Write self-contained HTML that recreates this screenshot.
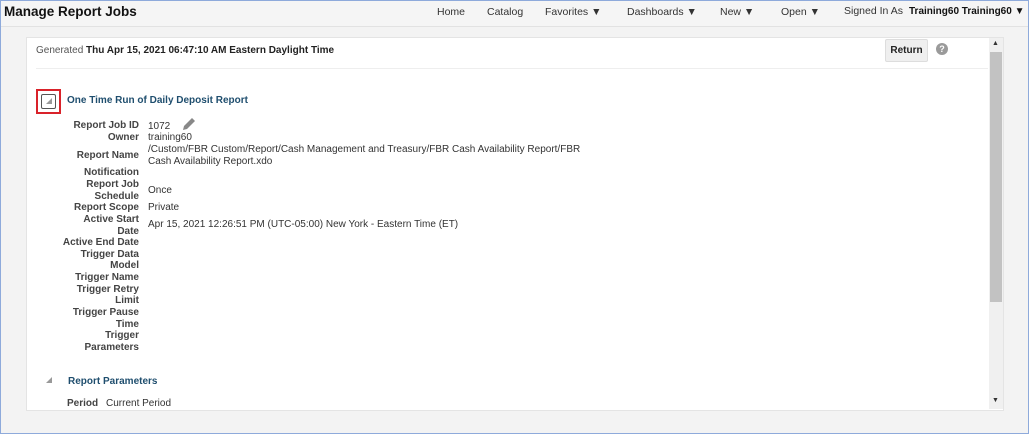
<!DOCTYPE html>
<html><head><style>
*{margin:0;padding:0;box-sizing:border-box}
body{width:1029px;height:434px;overflow:hidden;background:#fff;font-family:"Liberation Sans",Arial,sans-serif;color:#333;position:relative}
.frame{position:absolute;left:0;top:0;width:1029px;height:434px;border:1px solid #8eaadb;background:#f3f3f3}
.hdr{position:absolute;left:1px;top:1px;width:1027px;height:26px;background:#f5f5f5;border-bottom:1px solid #e2e2e2}
.t{position:absolute;white-space:nowrap;font-size:10px}
.nav{font-size:10.5px;top:6px;color:#333}
.panel{position:absolute;left:26px;top:37px;width:978px;height:374px;background:#fff;border:1px solid #e4e4e4}
.lab{position:absolute;right:890px;text-align:right;font-weight:bold;color:#444;font-size:10px;white-space:nowrap;line-height:11.6px;margin-top:1px}
.val{position:absolute;left:148px;font-size:10px;white-space:nowrap;line-height:11.6px;color:#333;margin-top:1px}
</style></head><body>
<div class="frame"></div>
<div class="hdr"></div>
<div class="t" style="left:4px;top:4px;font-size:13.5px;font-weight:bold;color:#111">Manage Report Jobs</div>
<div class="t nav" style="left:437px">Home</div>
<div class="t nav" style="left:487px">Catalog</div>
<div class="t nav" style="left:545px">Favorites ▼</div>
<div class="t nav" style="left:627px">Dashboards ▼</div>
<div class="t nav" style="left:720px">New ▼</div>
<div class="t nav" style="left:781px">Open ▼</div>
<div class="t nav" style="left:844px;top:5px">Signed In As</div>
<div class="t nav" style="left:909px;font-size:10px;font-weight:bold;color:#111">Training60 Training60 ▼</div>
<div class="panel"></div>
<div style="position:absolute;left:36px;top:68px;width:952px;height:1px;background:#eee"></div>
<div class="t" style="left:36px;top:45px;color:#555">Generated <b style="color:#222">Thu Apr 15, 2021 06:47:10 AM Eastern Daylight Time</b></div>
<div class="t" style="left:885px;top:39px;width:43px;height:23px;background:#efefef;border:1px solid #ddd;border-radius:2px;font-weight:bold;color:#222;text-align:center;line-height:21px">Return</div>
<div style="position:absolute;left:936px;top:43px;width:12px;height:12px;border-radius:50%;background:#9a9a9a;color:#fff;font-size:9px;font-weight:bold;text-align:center;line-height:12px">?</div>
<div style="position:absolute;left:989px;top:38px;width:14px;height:371px;background:#f0f0f0"></div>
<div style="position:absolute;left:990px;top:52px;width:12px;height:250px;background:#c2c2c2"></div>
<div class="t" style="left:992px;top:40px;font-size:7px;color:#333">▲</div>
<div class="t" style="left:992px;top:397px;font-size:7px;color:#333">▼</div>
<div style="position:absolute;left:36px;top:89px;width:25px;height:25px;border:2px solid #d9222a"></div>
<div style="position:absolute;left:41px;top:94px;width:15px;height:15px;border:1.5px solid #555;border-radius:2px;background:#fff"></div>
<div style="position:absolute;left:46px;top:98px;width:0;height:0;border-left:6px solid transparent;border-bottom:6px solid #999"></div>
<div class="t" style="left:67px;top:95px;font-weight:bold;color:#1f4e6e">One Time Run of Daily Deposit Report</div>
<div class="lab" style="top:119px">Report Job ID</div>
<div class="lab" style="top:131px">Owner</div>
<div class="lab" style="top:149px">Report Name</div>
<div class="lab" style="top:166px">Notification</div>
<div class="lab" style="top:178px">Report Job</div>
<div class="lab" style="top:190px">Schedule</div>
<div class="lab" style="top:201px">Report Scope</div>
<div class="lab" style="top:213px">Active Start</div>
<div class="lab" style="top:225px">Date</div>
<div class="lab" style="top:236px">Active End Date</div>
<div class="lab" style="top:248px">Trigger Data</div>
<div class="lab" style="top:259px">Model</div>
<div class="lab" style="top:271px">Trigger Name</div>
<div class="lab" style="top:283px">Trigger Retry</div>
<div class="lab" style="top:294px">Limit</div>
<div class="lab" style="top:306px">Trigger Pause</div>
<div class="lab" style="top:318px">Time</div>
<div class="lab" style="top:329px">Trigger</div>
<div class="lab" style="top:341px">Parameters</div>
<div class="val" style="top:120px">1072</div>
<svg style="position:absolute;left:182px;top:117px" width="14" height="14" viewBox="0 0 14 14"><path d="M1 13 L2 9 L10 1 L13 4 L5 12 Z" fill="#888"/></svg>
<div class="val" style="top:131px">training60</div>
<div class="val" style="top:143px">/Custom/FBR Custom/Report/Cash Management and Treasury/FBR Cash Availability Report/FBR</div>
<div class="val" style="top:155px">Cash Availability Report.xdo</div>
<div class="val" style="top:184px">Once</div>
<div class="val" style="top:201px">Private</div>
<div class="val" style="top:218px">Apr 15, 2021 12:26:51 PM (UTC-05:00) New York - Eastern Time (ET)</div>
<div style="position:absolute;left:46px;top:377px;width:0;height:0;border-left:6px solid transparent;border-bottom:6px solid #999"></div>
<div class="t" style="left:68px;top:376px;font-weight:bold;color:#1f4e6e">Report Parameters</div>
<div class="t" style="left:67px;top:398px;font-weight:bold;color:#444">Period</div>
<div class="t" style="left:106px;top:398px">Current Period</div>
</body></html>
